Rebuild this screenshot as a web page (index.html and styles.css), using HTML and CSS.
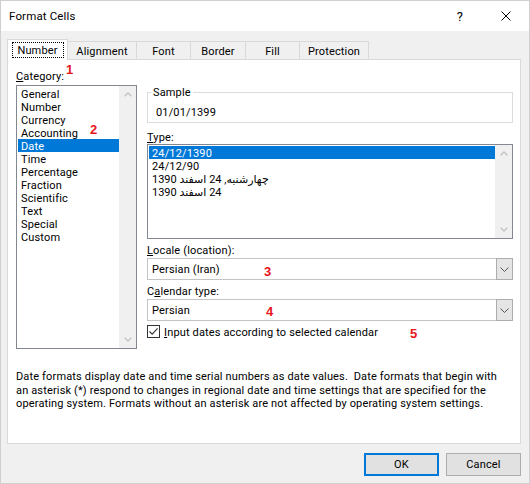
FILE: index.html
```html
<!DOCTYPE html>
<html>
<head>
<meta charset="utf-8">
<title>Format Cells</title>
<link rel="stylesheet" href="styles.css">
</head>
<body>
<div class="dialog">
  <div class="titlebar">
    <span class="title">Format Cells</span>
    <span class="help">?</span>
    <span class="close"><svg width="10" height="10" viewBox="0 0 10 10"><path d="M0.5 0.5L9.5 9.5M9.5 0.5L0.5 9.5" stroke="#000" stroke-width="1" fill="none"/></svg></span>
  </div>
  <div class="body">
    <div class="tabs">
      <div class="tab tab-active t-number"><span class="focus">Number</span></div>
      <div class="tab t-align">Alignment</div>
      <div class="tab t-font">Font</div>
      <div class="tab t-border">Border</div>
      <div class="tab t-fill">Fill</div>
      <div class="tab t-prot">Protection</div>
    </div>
    <div class="panel">
      <div class="grid">
        <div class="cat-label"><u>C</u>ategory:</div>
        <div class="listbox cat-list">
          <div class="items">
            <div class="item">General</div>
            <div class="item">Number</div>
            <div class="item">Currency</div>
            <div class="item">Accounting</div>
            <div class="item selected">Date</div>
            <div class="item">Time</div>
            <div class="item">Percentage</div>
            <div class="item">Fraction</div>
            <div class="item">Scientific</div>
            <div class="item">Text</div>
            <div class="item">Special</div>
            <div class="item">Custom</div>
          </div>
          <div class="vscroll">
            <span class="arrow"><svg width="8" height="5" viewBox="0 0 8 5"><path d="M0.7 4.3L4 1L7.3 4.3" stroke="#c4c4c4" stroke-width="1.4" fill="none"/></svg></span>
            <span class="arrow"><svg width="8" height="5" viewBox="0 0 8 5"><path d="M0.7 0.7L4 4L7.3 0.7" stroke="#c4c4c4" stroke-width="1.4" fill="none"/></svg></span>
          </div>
        </div>
        <div class="right">
          <fieldset class="sample">
            <legend>Sample</legend>
            <div class="sample-val">01/01/1399</div>
          </fieldset>
          <div class="label type-label"><u>T</u>ype:</div>
          <div class="listbox type-list">
            <div class="items">
              <div class="item selected">24/12/1390</div>
              <div class="item">24/12/90</div>
              <div class="item"><bdi dir="rtl">چهارشنبه, 24 اسفند 1390</bdi></div>
              <div class="item"><bdi dir="rtl">24 اسفند 1390</bdi></div>
            </div>
            <div class="vscroll">
              <span class="arrow"><svg width="8" height="5" viewBox="0 0 8 5"><path d="M0.7 4.3L4 1L7.3 4.3" stroke="#c4c4c4" stroke-width="1.4" fill="none"/></svg></span>
              <span class="arrow"><svg width="8" height="5" viewBox="0 0 8 5"><path d="M0.7 0.7L4 4L7.3 0.7" stroke="#c4c4c4" stroke-width="1.4" fill="none"/></svg></span>
            </div>
          </div>
          <div class="label combo-label"><u>L</u>ocale (location):</div>
          <div class="combo">
            <span class="combo-text">Persian (Iran)</span>
            <span class="combo-btn"><svg width="9" height="5" viewBox="0 0 9 5"><path d="M0.5 0.5L4.5 4.5L8.5 0.5" stroke="#555" stroke-width="1" fill="none"/></svg></span>
          </div>
          <div class="label combo-label">C<u>a</u>lendar type:</div>
          <div class="combo">
            <span class="combo-text">Persian</span>
            <span class="combo-btn"><svg width="9" height="5" viewBox="0 0 9 5"><path d="M0.5 0.5L4.5 4.5L8.5 0.5" stroke="#555" stroke-width="1" fill="none"/></svg></span>
          </div>
          <div class="check">
            <span class="box"><svg width="11" height="11" viewBox="0 0 11 11"><path d="M1.5 5.5L4.2 8.2L9.6 2.4" stroke="#333" stroke-width="1.1" fill="none"/></svg></span>
            <span class="check-text"><u>I</u>nput dates according to selected calendar</span>
          </div>
        </div>
      </div>
      <p class="desc">Date formats display date and time serial numbers as date values.&nbsp; Date formats that begin with<br>an asterisk (*) respond to changes in regional date and time settings that are specified for the<br>operating system. Formats without an asterisk are not affected by operating system settings.</p>
    </div>
    <div class="buttons">
      <div class="btn btn-default">OK</div>
      <div class="btn">Cancel</div>
    </div>
  </div>
  <span class="mark m1">1</span>
  <span class="mark m2">2</span>
  <span class="mark m3">3</span>
  <span class="mark m4">4</span>
  <span class="mark m5">5</span>
</div>
</body>
</html>
```

FILE: styles.css
```css
* { box-sizing: border-box; }
html, body { margin: 0; padding: 0; background: #fff; }
body {
  font-family: Roboto, "DejaVu Sans", sans-serif;
  font-size: 11px;
  letter-spacing: 0.15px;
  color: #000;
}
u { text-decoration: underline; text-underline-offset: 1px; }

.dialog {
  position: relative;
  width: 530px;
  height: 484px;
  border: 1px solid #cfcfcf;
  background: #f0f0f0;
  display: flex;
  flex-direction: column;
}

.titlebar {
  flex: none;
  height: 30px;
  background: #fff;
  display: flex;
  align-items: center;
}
.title { padding-left: 8px; font-size: 11.5px; }
.help {
  margin-left: auto;
  width: 46px;
  text-align: center;
  font-size: 13px;
}
.close {
  width: 46px;
  height: 30px;
  display: flex;
  align-items: center;
  justify-content: center;
}

.body {
  flex: 1;
  padding: 8px 8px 0 6px;
  display: flex;
  flex-direction: column;
}

.tabs {
  position: relative;
  z-index: 1;
  display: flex;
  align-items: flex-end;
  height: 20px;
}
.tab {
  height: 18px;
  border: 1px solid #d9d9d9;
  border-bottom: none;
  margin-left: -1px;
  background: #f0f0f0;
  text-align: center;
  line-height: 13px;
  padding-top: 3px;
}
.tab-active {
  margin-left: 0;
  height: 21px;
  margin-bottom: -1px;
  background: #fff;
  padding-top: 2px;
}
.focus {
  display: inline-block;
  width: 52px;
  height: 16px;
  line-height: 13px;
  padding-top: 1px;
  border: 1px dotted #000;
}
.t-number { width: 61px; }
.t-align { width: 70px; }
.t-font { width: 55px; }
.t-border { width: 56px; }
.t-fill { width: 55px; }
.t-prot { width: 70px; }

.panel {
  height: 385px;
  background: #fff;
  border: 1px solid #d9d9d9;
  padding: 8px 7px 0 8px;
}

.grid {
  display: grid;
  grid-template-columns: 121px 366px;
  column-gap: 10px;
  row-gap: 2px;
}
.cat-label { line-height: 15px; padding-top: 1px; height: 15px; grid-column: 1; }
.cat-list { grid-column: 1; grid-row: 2; height: 264px; }
.right { grid-column: 2; grid-row: 2; display: flex; flex-direction: column; }

.listbox {
  border: 1px solid #828790;
  background: #fff;
  display: flex;
}
.items { flex: 1; padding: 1px 0 0 1px; }
.item {
  height: 13px;
  line-height: 13px;
  padding: 1px 0 0 3px;
  white-space: nowrap;
}
.item.selected { background: #0078d7; color: #fff; }
.vscroll {
  width: 17px;
  background: #f0f0f0;
  display: flex;
  flex-direction: column;
  justify-content: space-between;
}
.arrow {
  height: 17px;
  display: flex;
  align-items: center;
  justify-content: center;
}

.sample {
  margin: 0;
  padding: 5px 4px 2px 3px;
  border: 1px solid #dcdcdc;
  min-width: 0;
}
.sample legend {
  padding: 0 2px;
  line-height: 15px;
}
.sample-val { line-height: 15px; padding-left: 5px; }

.label { line-height: 15px; }
.type-label { margin-top: 6px; padding-top: 1px; height: 15px; }
.type-list { height: 95px; }
.combo-label { margin-top: 3px; margin-bottom: 1px; padding-top: 1px; height: 15px; }

.combo {
  height: 22px;
  border: 1px solid #c4c4c4;
  background: #fff;
  display: flex;
  align-items: stretch;
}
.combo-text { flex: 1; line-height: 21px; padding-left: 4px; }
.combo-btn {
  width: 17px;
  margin: -1px -1px -1px 0;
  background: #e5e5e5;
  border: 1px solid #adadad;
  display: flex;
  align-items: center;
  justify-content: center;
}

.check {
  margin-top: 3px;
  height: 15px;
  display: flex;
  align-items: center;
}
.box {
  width: 13px;
  height: 13px;
  border: 1px solid #333;
  background: #fff;
  display: flex;
  align-items: center;
  justify-content: center;
}
.check-text { margin-left: 4px; line-height: 15px; padding-top: 1px; }

.desc {
  margin: 21px 0 0 0;
  line-height: 13.5px;
  white-space: nowrap;
}

.buttons {
  display: flex;
  justify-content: flex-end;
  gap: 7px;
  margin-top: 9px;
}
.btn {
  width: 75px;
  height: 23px;
  border: 1px solid #adadad;
  background: #e1e1e1;
  display: flex;
  align-items: center;
  justify-content: center;
}
.btn-default { border: 2px solid #0078d7; }

.mark {
  position: absolute;
  font-family: "Liberation Sans", Arial, sans-serif;
  font-weight: bold;
  font-size: 13px;
  line-height: 13px;
  letter-spacing: 0;
  color: #e8141c;
}
.m1 { left: 65px; top: 62px; }
.m2 { left: 89px; top: 122px; }
.m3 { left: 263px; top: 264px; }
.m4 { left: 265px; top: 304px; }
.m5 { left: 409px; top: 326px; }
```
